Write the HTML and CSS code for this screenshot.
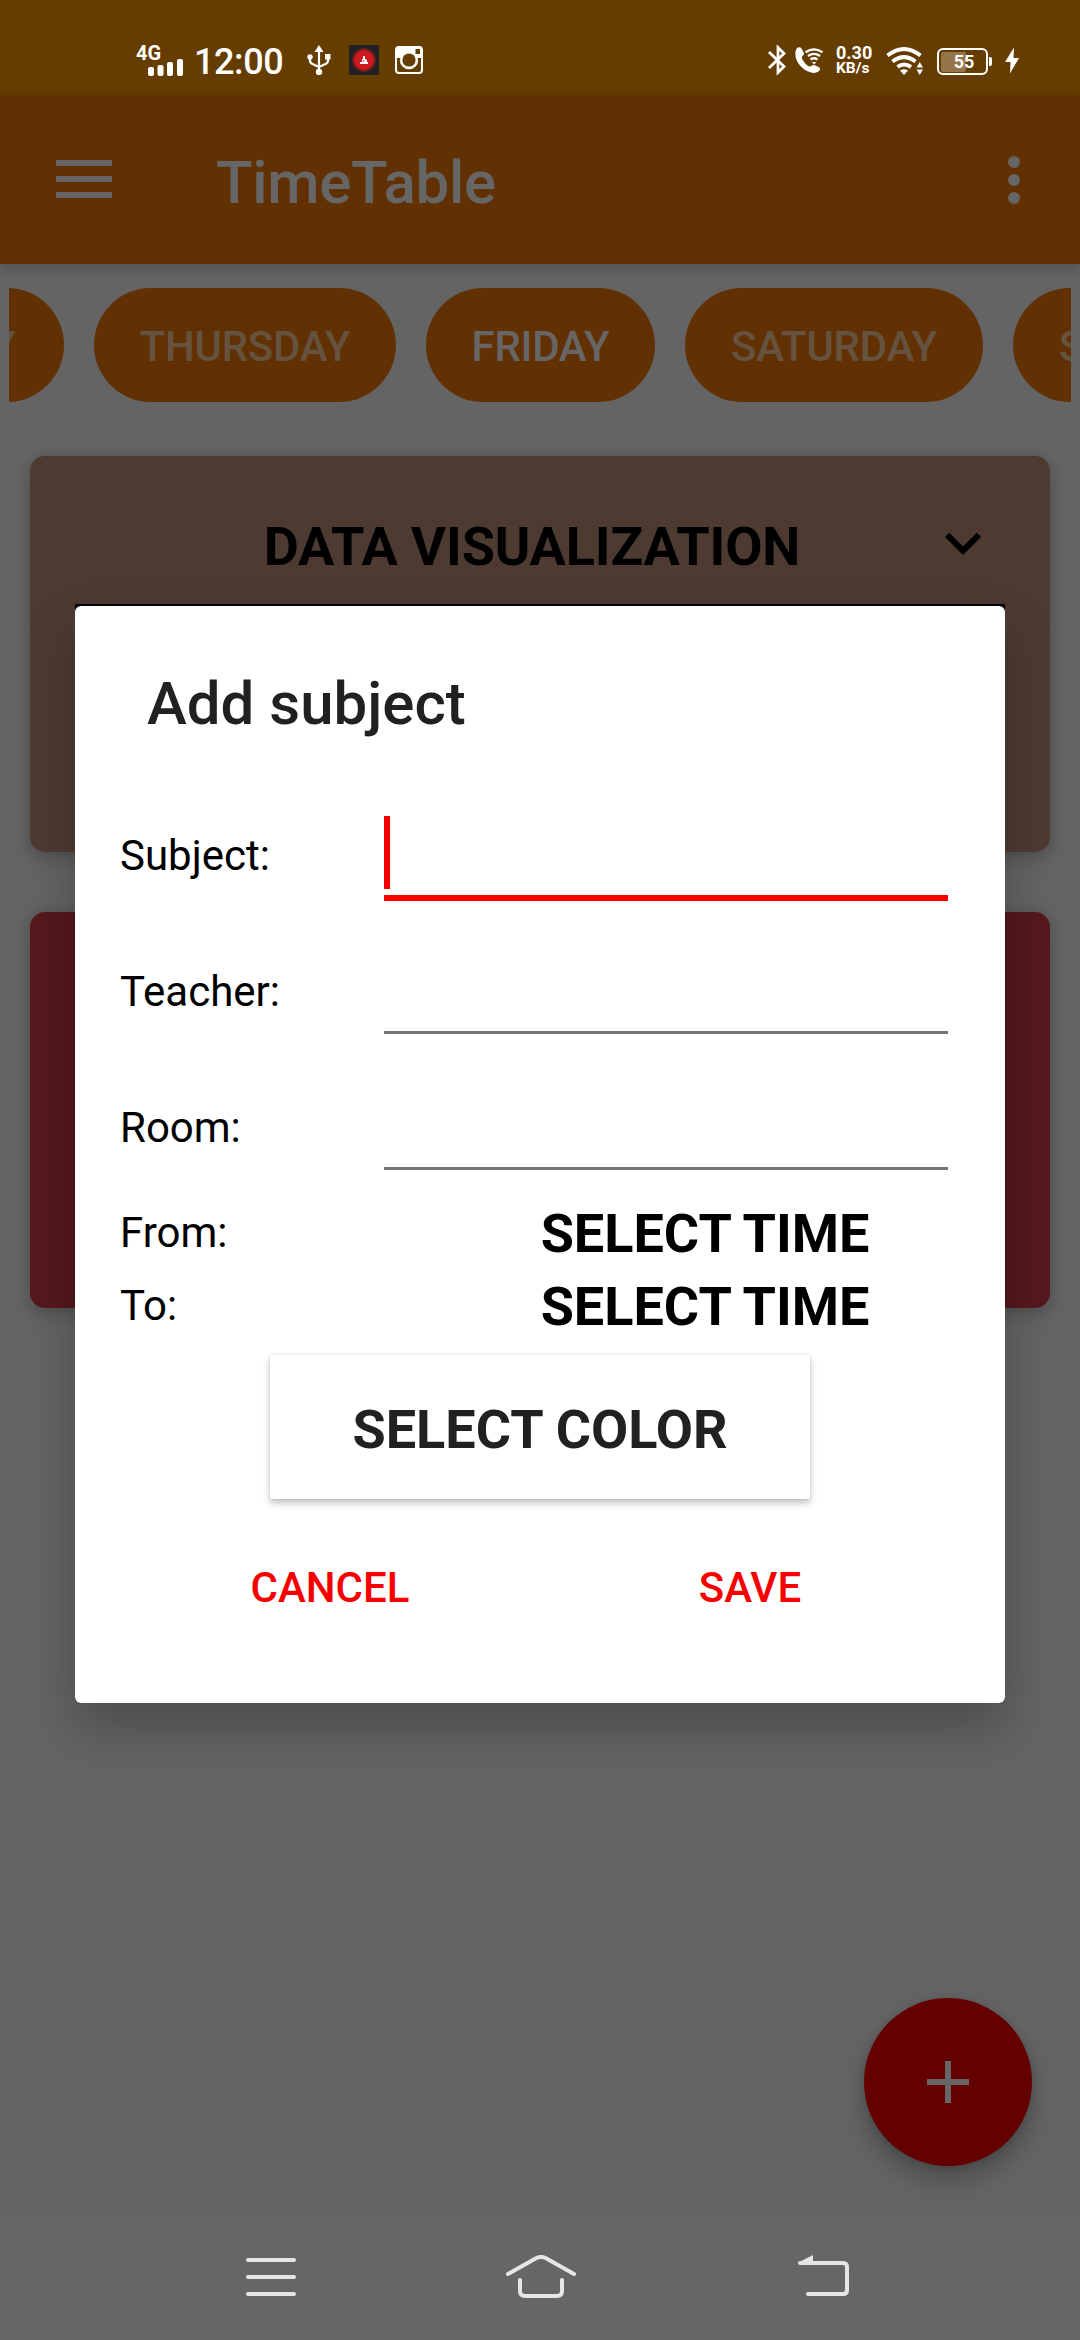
FILE: index.html
```html
<!DOCTYPE html>
<html lang="en">
<head>
<meta charset="utf-8">
<title>TimeTable</title>
<link rel="stylesheet" href="styles.css">
</head>
<body>
<div class="screen">
  <header class="status">
    <div class="signal">
      <span class="net">4G</span>
      <svg class="bars" width="36" height="17" viewBox="0 0 36 17" fill="#fff"><rect x="0" y="8" width="6" height="9" rx="2"/><rect x="9.5" y="6" width="6" height="11" rx="2"/><rect x="19" y="3" width="6" height="14" rx="2"/><rect x="29" y="0" width="6" height="17" rx="2"/></svg>
    </div>
    <span class="clock">12:00</span>
    <svg class="usb" width="24" height="30" viewBox="0 0 24 30" fill="none" stroke="#fff" stroke-width="2.2"><path d="M12 5v21M3 12v3.500q0 2.500 2.500 3.500L12 22M21 11v4.500q0 2.500-2.500 3.500L12 22"/><path d="M12 0l4.500 7h-9z" fill="#fff" stroke="none"/><circle cx="3" cy="12" r="2.700" fill="#fff" stroke="none"/><path d="M18 9h5.500v5.500H18z" fill="#fff" stroke="none"/><circle cx="12" cy="27" r="3.200" fill="#fff" stroke="none"/></svg>
    <svg class="app" width="30" height="30" viewBox="0 0 30 30"><path fill="#212124" d="M0 0h30v30H0z"/><circle cx="15" cy="15" r="12" fill="#6b1c20"/><circle cx="15" cy="15" r="10" fill="#cc1a20"/><path d="M14 11h2v3l2 1v2h1v2h-8v-2h2v-3h1z" fill="#fff"/><path d="M13.500 15.500h2v1h-2z" fill="#cc1a20"/></svg>
    <svg class="insta" width="28" height="30" viewBox="0 0 28 30"><rect x="1" y="2" width="26" height="26" rx="3" fill="none" stroke="#fff" stroke-width="2"/><path d="M1 4q0-3 3-3h20q3 0 3 3v9H1z" fill="#fff"/><circle cx="14" cy="15" r="9.200" fill="#fff"/><circle cx="14" cy="15" r="6.600" fill="#663d00"/><path d="M20.500 4H25v5h-4.500zM1.800 13h3.400v1.500H1.800zM22.800 13h3.400v1.500h-3.400z" fill="#663d00"/></svg>
    <svg class="bt" width="18" height="30" viewBox="0 0 18 30" fill="none" stroke="#fff" stroke-width="2.800"><path d="M1 7l15 14.500-6 6V2.500l6 6L1 23"/></svg>
    <svg class="call" width="28" height="30" viewBox="0 0 28 30"><path d="M2 3q3-1.500 4.500.500l2.200 4q.800 2-1 3.300-1.500 1.200-.500 3.200 2 4 5.500 6.800 2 1.500 3.500.200 1.800-1.500 3.500-.800l4 1.800q2 1.200 1 3.200-2 3-6 2.800Q11.500 27.500 5 20.500-.500 14 .500 6.500 1 4 2 3z" fill="#fff"/><g fill="none" stroke="#fff" stroke-width="2.300"><path d="M10.500 7.300q8.500-6 17 0M13 11q6-4.200 12 0M15.500 14.500q3.500-2.500 7 0"/></g><path d="M16.800 17h4.600l-2.300 2.600z" fill="#fff"/></svg>
    <div class="speed"><span>0.30</span><span>KB/s</span></div>
    <svg class="wifi" width="37" height="30" viewBox="0 0 37 30"><g fill="none" stroke="#fff" stroke-width="4"><path d="M1.500 10.500q16.500-13 33 0M6.500 16.500q11.500-8.800 23 0M11.500 22q6.500-5 13.500 0"/></g><path d="M14 25.500q4-2.500 8 0l-4 4.500z" fill="#fff"/><path d="M30.500 22.500h6.500l-3.250-5.500zM30.500 24.500h6.500l-3.250 5.500z" fill="#fff"/></svg>
    <div class="battery"><div class="level"></div><span class="pct">55</span></div>
    <i class="nub"></i>
    <svg class="bolt" width="16" height="30" viewBox="0 0 16 30"><path d="M10 2.500L1 17h5.500L6 28.500 15 13H9.500z" fill="#fff"/></svg>
  </header>

  <div class="appbar">
    <svg width="56" height="38" viewBox="0 0 56 38" fill="#666"><path d="M0 0h56v6H0zM0 16h56v6H0zM0 32h56v6H0z"/></svg>
    <h1 class="app-title">TimeTable</h1>
    <svg class="more" width="12" height="48" viewBox="0 0 12 48" fill="#666"><circle cx="6" cy="6" r="6"/><circle cx="6" cy="24" r="6"/><circle cx="6" cy="42" r="6"/></svg>
  </div>

  <main class="content">
    <nav class="days">
      <span class="chip wed">WEDNESDAY</span>
      <span class="chip thu">THURSDAY</span>
      <span class="chip fri active">FRIDAY</span>
      <span class="chip sat">SATURDAY</span>
      <span class="chip sun">SUNDAY</span>
    </nav>
    <section class="card brown">
      <h2 class="card-title">DATA VISUALIZATION</h2>
      <svg class="chevron" width="72" height="72" viewBox="0 0 24 24"><path d="M16.590 8.590L12 13.170 7.410 8.590 6 10l6 6 6-6z"/></svg>
    </section>
    <section class="card red"></section>
  </main>

  <footer class="navbar">
    <svg width="50" height="44" viewBox="246 2255 50 44" stroke="#e6e6e6" stroke-width="4" stroke-linecap="round"><path d="M248 2260h46M248 2277h46M248 2294h46"/></svg>
    <svg width="70" height="44" viewBox="506 2255 70 44" fill="none" stroke="#e6e6e6" stroke-width="4" stroke-linecap="round" stroke-linejoin="round"><path d="M508 2274l28-15.800q5-2.500 10 0l28 15.800M520 2280v11q0 5 5 5h32q5 0 5-5v-11"/></svg>
    <svg width="51" height="44" viewBox="798 2255 51 44" fill="none" stroke="#e6e6e6" stroke-width="4" stroke-linecap="round"><path d="M800 2263h43q4 0 4 4v23q0 4-4 4h-35"/><path d="M798.500 2262.500l14.500-7.500v9z" fill="#e6e6e6" stroke="none"/></svg>
  </footer>

  <div class="fab"><svg width="42" height="42" viewBox="0 0 42 42" fill="#666"><path d="M18 0h6v18h18v6H24v18h-6V24H0v-6h18z"/></svg></div>

  <div class="window">
    <div class="dialog">
      <h2 class="dialog-title">Add subject</h2>
      <div class="form">
        <div class="row"><span class="label">Subject:</span><div class="field focused"><i class="caret"></i></div></div>
        <div class="row"><span class="label">Teacher:</span><div class="field"></div></div>
        <div class="row"><span class="label">Room:</span><div class="field"></div></div>
        <div class="row short"><span class="label">From:</span><span class="time">SELECT TIME</span></div>
        <div class="row short"><span class="label">To:</span><span class="time">SELECT TIME</span></div>
      </div>
      <div class="color-btn">SELECT COLOR</div>
      <div class="actions"><span>CANCEL</span><span>SAVE</span></div>
    </div>
  </div>
</div>
</body>
</html>
```
FILE: styles.css
```css
* { box-sizing: border-box; margin: 0; padding: 0; }
body { font-family: Roboto, "Liberation Sans", sans-serif; background: #646464; }
svg { display: block; flex: none; }
.screen { position: relative; width: 1080px; height: 2340px; overflow: hidden; display: flex; flex-direction: column; background: #646464; }

.status { flex: none; height: 96px; background: #663d00; color: #fff; display: flex; align-items: flex-start; padding: 45px 0 0 136px; }
.signal { width: 47px; height: 30px; flex: none; display: flex; flex-direction: column; }
.net { font-size: 20px; line-height: 14px; height: 14px; font-weight: 700; margin-top: 1px; }
.bars { margin: -1px 0 0 12px; }
.clock { width: 90px; margin-left: 11px; font-size: 36px; line-height: 35px; font-weight: 500; letter-spacing: -0.4px; }
.usb { margin-left: 23px; }
.app { margin-left: 18px; }
.insta { margin-left: 16px; }
.bt { margin-left: 345px; }
.call { margin-left: 9px; }
.speed { margin-left: 13px; width: 36px; display: flex; flex-direction: column; font-weight: 700; font-size: 18px; line-height: 15px; }
.speed span + span { font-size: 15.5px; line-height: 17px; }
.wifi { margin-left: 14px; }
.battery { margin: 3px 0 0 14px; width: 51px; height: 27px; border: 2px solid #fff; border-radius: 6px; padding: 2px; display: grid; }
.level { grid-area: 1 / 1; width: 25px; background: #94764a; border-radius: 2px; }
.pct { grid-area: 1 / 1; text-align: center; font-size: 18px; line-height: 20px; font-weight: 700; padding-left: 3px; }
.nub { width: 3px; height: 9px; background: #fff; border-radius: 0 2px 2px 0; margin: 9px 0 0 1px; align-self: flex-start; position: relative; top: 3px; }
.bolt { margin-left: 12px; }

.appbar { flex: none; height: 168px; background: #623103; display: flex; align-items: center; padding: 0 60px 0 56px; box-shadow: 0 3px 14px rgba(0,0,0,.22); color: #666; }
.appbar > svg:first-child { margin-top: -2px; }
.app-title { font-size: 60px; font-weight: 500; line-height: 70px; margin-left: 104px; padding-top: 5px; letter-spacing: -0.3px; }
.more { margin-left: auto; }

.content { flex: 1; display: flex; flex-direction: column; padding-top: 24px; }
.days { display: flex; gap: 30px; margin: 0 9px; height: 114px; overflow: hidden; }
.chip { flex: none; height: 114px; border-radius: 57px; background: #623103; color: #65533f; font-size: 42px; font-weight: 500; line-height: 117px; text-align: center; letter-spacing: -0.3px; }
.chip.active { color: #666; }
.wed { width: 340px; margin-left: -285px; }
.thu { width: 302px; }
.fri { width: 229px; }
.sat { width: 298px; }
.sun { width: 250px; text-align: left; padding-left: 46px; }
.card { height: 396px; margin: 54px 30px 0; border-radius: 15px; box-shadow: 0 4px 18px rgba(0,0,0,.26); display: flex; }
.card + .card { margin-top: 60px; }
.brown { background: #4d3b32; }
.red { background: #55191d; }
.card-title { width: 897px; padding: 59px 0 0 107px; text-align: center; font-size: 54px; line-height: 64px; font-weight: 700; color: #000; letter-spacing: -0.15px; }
.chevron { margin-top: 51px; }

.navbar { flex: none; height: 126px; background: #666; display: flex; padding: 41px 231px 0 246px; }
.navbar svg:nth-child(2) { margin-left: 210px; }
.navbar svg:nth-child(3) { margin-left: 222px; }

.fab { position: absolute; left: 864px; top: 1998px; width: 168px; height: 168px; border-radius: 50%; background: #640000; display: flex; align-items: center; justify-content: center; box-shadow: 0 14px 26px rgba(0,0,0,.24), 0 2px 8px rgba(0,0,0,.14); }

.window { position: absolute; left: 75px; top: 604px; width: 930px; height: 1099px; padding-top: 2px; border-radius: 0 0 6px 6px; background: #000; box-shadow: 0 26px 50px rgba(0,0,0,.24); }
.dialog { height: 1097px; background: #fff; border-radius: 6px; padding: 63px 45px 0; display: flex; flex-direction: column; }
.dialog-title { font-size: 60px; line-height: 70px; font-weight: 500; color: #212121; padding-left: 27px; }
.form { margin-top: 49px; color: #000; }
.row { height: 136px; display: grid; grid-template-columns: 264px 576px; align-items: center; }
.row.short { height: 73px; }
.label { font-size: 42px; line-height: 50px; }
.field { width: 564px; align-self: end; margin-bottom: 26px; border-bottom: 3px solid #757575; height: 80px; }
.field.focused { margin-bottom: 23px; border-bottom: 6px solid #f80000; height: 85px; display: flex; }
.caret { width: 6px; height: 73px; background: #f80000; }
.time { margin-left: 66px; text-align: center; font-size: 54px; line-height: 64px; font-weight: 700; padding-top: 2px; }
.color-btn { width: 540px; height: 144px; margin: 13px auto 0; background: #fff; box-shadow: 0 4px 7px rgba(0,0,0,.24), 0 0 2px rgba(0,0,0,.12); text-align: center; font-size: 54px; line-height: 150px; font-weight: 700; color: #212121; }
.actions { display: grid; grid-template-columns: 1fr 1fr; margin-top: 16px; text-align: center; font-size: 42px; line-height: 146px; font-weight: 500; color: #f80000; }
```
